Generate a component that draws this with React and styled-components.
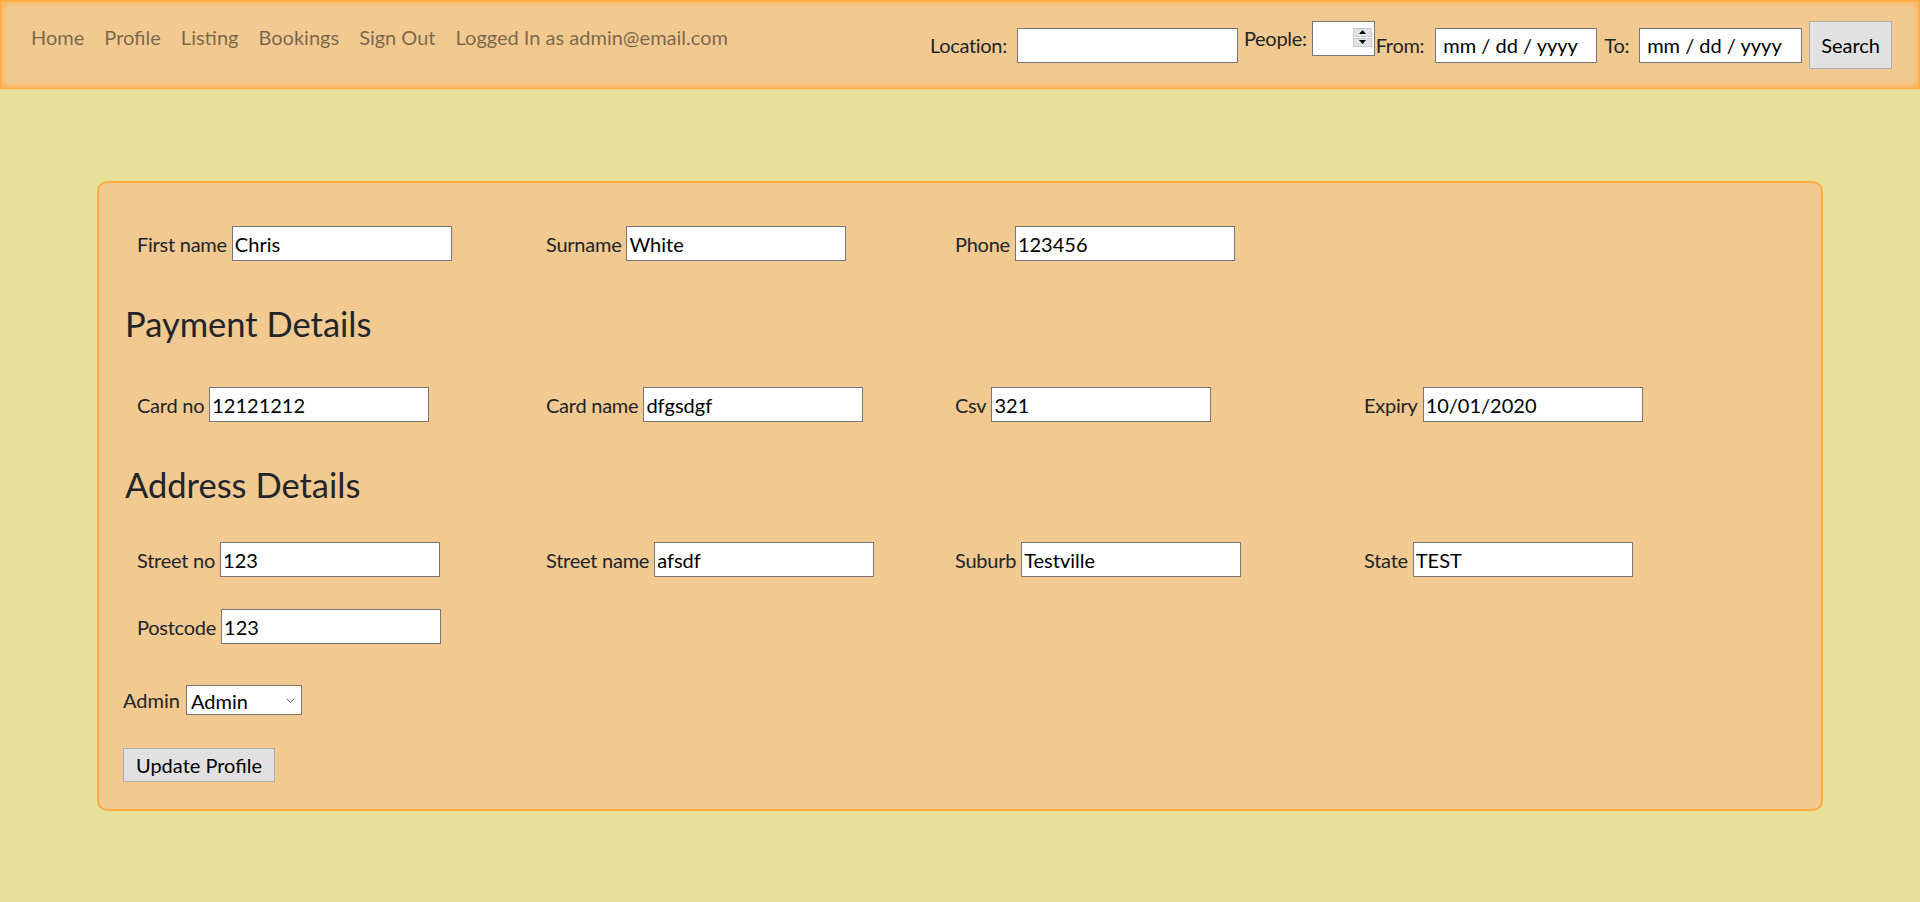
import React from "react";
import styled, { createGlobalStyle } from "styled-components";

const GlobalStyle = createGlobalStyle`
  html, body { margin: 0; padding: 0; }
  * { box-sizing: border-box; }
  body {
    background: #e8e19c;
    font-family: Lato, "Open Sans", sans-serif;
    font-size: 20px;
    line-height: 30px;
    color: #212529;
    min-height: 902px;
  }
`;

const Navbar = styled.nav`
  display: flex;
  justify-content: space-between;
  height: 89px;
  padding: 11px 27px 10px 20px;
  background: #f1c991;
  border: 1px solid #ffa83c;
  box-shadow: inset 0 0 6px 1px #ffa83c;
`;

const NavList = styled.ul`
  display: flex;
  align-self: flex-start;
  margin: 0;
  padding: 0;
  list-style: none;
`;

const NavLink = styled.a`
  display: block;
  padding: 10px;
  color: rgba(0, 0, 0, 0.5);
  text-decoration: none;
  white-space: nowrap;
`;

const SearchForm = styled.form`
  display: flex;
  align-items: center;
  align-self: center;
  margin: 0;
`;

const InlineLabel = styled.label`
  margin-right: ${(p) => p.$gap || 0}px;
  letter-spacing: -0.3px;
  white-space: nowrap;
`;

const Group = styled.div`
  display: flex;
  align-items: center;
  margin-bottom: ${(p) => p.$lift || 0}px;
  margin-right: ${(p) => p.$gap || 0}px;
`;

const TextInput = styled.input`
  width: ${(p) => p.$w || 220}px;
  height: 35px;
  margin: 0 ${(p) => p.$gap || 0}px 0 0;
  padding: 1px ${(p) => p.$pad || 2}px;
  border: 1px solid #767676;
  border-radius: 0;
  background: #fff;
  font: inherit;
  color: #000;
  outline: none;
  &::placeholder { color: #000; opacity: 1; }
`;

const NumberBox = styled.div`
  position: relative;
  width: 63px;
  height: 35px;
`;

const Spinner = styled.div`
  position: absolute;
  right: 3px;
  top: 7px;
  width: 19px;
  height: 19px;
  display: flex;
  flex-direction: column;
  gap: 1px;
`;

const SpinButton = styled.span`
  flex: 1;
  display: flex;
  align-items: center;
  justify-content: center;
  background: #e3e3e3;
  border: 1px solid #c9c9c9;
`;

const Button = styled.button`
  height: ${(p) => p.$h || 34}px;
  padding: 0 ${(p) => p.$px || 12}px;
  background: #e1e1e1;
  border: 1px solid #adadad;
  border-radius: 0;
  font: inherit;
  line-height: 30px;
  color: #000;
  margin-top: ${(p) => p.$mt || 0}px;
`;

const Card = styled.section`
  width: 1726px;
  margin: 92px auto 0;
  padding: 0 24px 27px;
  background: #f1c991;
  border: 2px solid #ffa83c;
  border-radius: 10px;
  display: flex;
  flex-direction: column;
  align-items: flex-start;
`;

const FieldGrid = styled.div`
  display: grid;
  grid-template-columns: repeat(4, 409px);
  row-gap: 32px;
  padding-left: 14px;
  margin-top: ${(p) => p.$mt || 0}px;
`;

const Field = styled.div`
  display: flex;
  align-items: center;
  gap: 5px;
  white-space: nowrap;
`;

const FieldLabel = styled.label`
  letter-spacing: -0.25px;
`;

const SectionTitle = styled.h3`
  margin: ${(p) => p.$mt || 0}px 0 0 2px;
  font-size: 34.5px;
  line-height: 42px;
  font-weight: 400;
`;

const AdminRow = styled.div`
  display: flex;
  align-items: center;
  gap: 6px;
  margin-top: ${(p) => p.$mt || 0}px;
`;

const SelectBox = styled.div`
  position: relative;
  width: 116px;
  height: 30px;
`;

const Select = styled.select`
  width: 100%;
  height: 100%;
  appearance: none;
  padding: 0 0 0 4px;
  border: 1px solid #767676;
  border-radius: 0;
  background: #fff;
  font: inherit;
  color: #000;
  outline: none;
`;

const Chevron = styled.svg`
  position: absolute;
  right: 7px;
  top: 13px;
  pointer-events: none;
`;

const Arrow = ({ up }) => (
  <svg width="7" height="4" viewBox="0 0 7 4">
    <polygon points={up ? "3.5,0 7,4 0,4" : "0,0 7,0 3.5,4"} fill="#000" />
  </svg>
);

const links = ["Home", "Profile", "Listing", "Bookings", "Sign Out", "Logged In as admin@email.com"];

const Input = ({ label, value, w }) => (
  <Field>
    <FieldLabel>{label}</FieldLabel>
    <TextInput type="text" defaultValue={value} $w={w} />
  </Field>
);

export default function App() {
  return (
    <>
      <GlobalStyle />
      <Navbar>
        <NavList>
          {links.map((l) => (
            <li key={l}>
              <NavLink href="#">{l}</NavLink>
            </li>
          ))}
        </NavList>
        <SearchForm onSubmit={(e) => e.preventDefault()}>
          <InlineLabel $gap={10}>Location:</InlineLabel>
          <TextInput type="text" $w={221} $gap={6} />
          <Group $lift={14} $gap={1}>
            <InlineLabel $gap={5}>People:</InlineLabel>
            <NumberBox>
              <TextInput type="text" $w={63} />
              <Spinner>
                <SpinButton><Arrow up /></SpinButton>
                <SpinButton><Arrow /></SpinButton>
              </Spinner>
            </NumberBox>
          </Group>
          <InlineLabel $gap={11}>From:</InlineLabel>
          <TextInput type="text" placeholder="mm / dd / yyyy" $w={162} $pad={7} $gap={7} />
          <InlineLabel $gap={10}>To:</InlineLabel>
          <TextInput type="text" placeholder="mm / dd / yyyy" $w={163} $pad={7} $gap={7} />
          <Button type="submit" $h={48} $px={11}>Search</Button>
        </SearchForm>
      </Navbar>

      <Card>
        <FieldGrid $mt={43}>
          <Input label="First name" value="Chris" />
          <Input label="Surname" value="White" />
          <Input label="Phone" value="123456" />
        </FieldGrid>

        <SectionTitle $mt={42}>Payment Details</SectionTitle>
        <FieldGrid $mt={42}>
          <Input label="Card no" value="12121212" />
          <Input label="Card name" value="dfgsdgf" />
          <Input label="Csv" value="321" />
          <Input label="Expiry" value="10/01/2020" />
        </FieldGrid>

        <SectionTitle $mt={42}>Address Details</SectionTitle>
        <FieldGrid $mt={36}>
          <Input label="Street no" value="123" />
          <Input label="Street name" value="afsdf" />
          <Input label="Suburb" value="Testville" />
          <Input label="State" value="TEST" />
          <Input label="Postcode" value="123" />
        </FieldGrid>

        <AdminRow $mt={41}>
          <label>Admin</label>
          <SelectBox>
            <Select defaultValue="admin">
              <option value="admin">Admin</option>
              <option value="user">User</option>
            </Select>
            <Chevron width="9" height="5" viewBox="0 0 9 5">
              <polyline points="0.5,0.5 4.5,4.5 8.5,0.5" fill="none" stroke="#666" strokeWidth="1" />
            </Chevron>
          </SelectBox>
        </AdminRow>

        <Button type="button" $mt={33}>Update Profile</Button>
      </Card>
    </>
  );
}
